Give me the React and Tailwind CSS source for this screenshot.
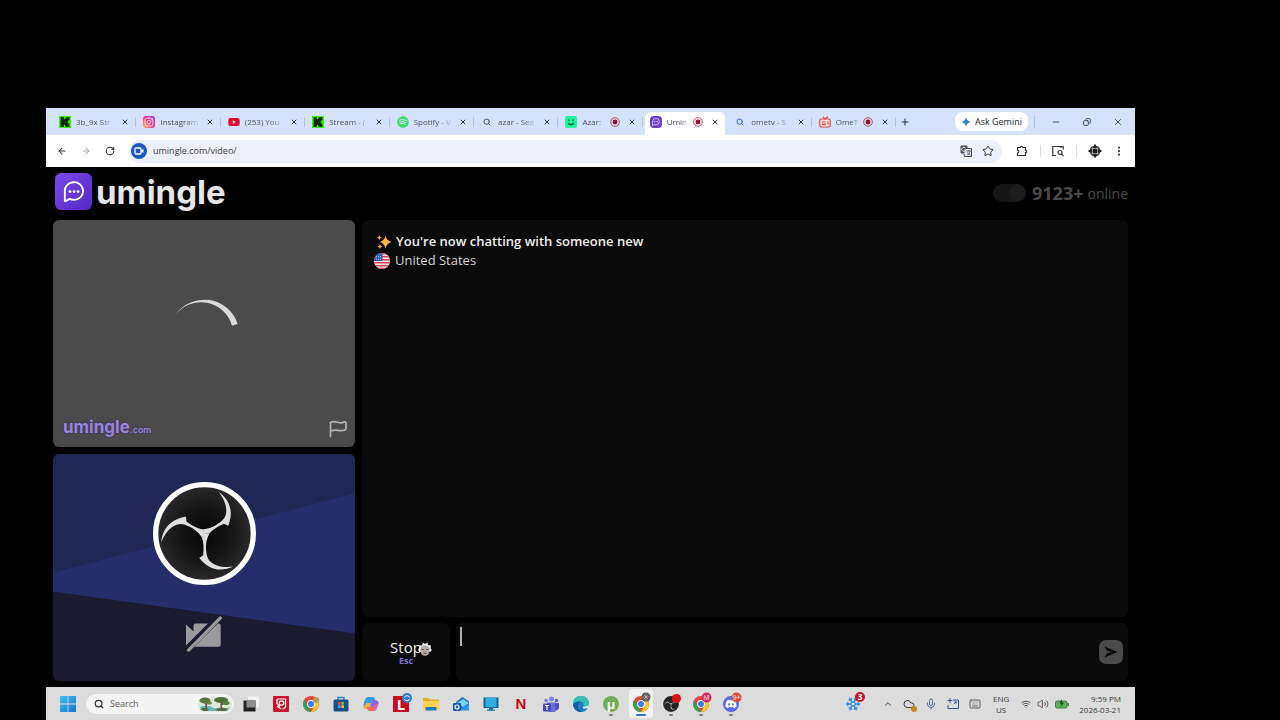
import React from "react";
import {
  ArrowLeft, ArrowRight, RotateCw, X, Search, Star, Plus, Minus, ChevronUp,
  EllipsisVertical, Mic, Keyboard, Wifi, Volume2, Snowflake, Cloud, Copy,
} from "lucide-react";
import { FaYoutube, FaSpotify, FaInstagram, FaDiscord } from "react-icons/fa";
import { SiKick } from "react-icons/si";

/* ---------- favicons ---------- */

const KickIcon = () => (
  <span className="flex size-3 items-center justify-center bg-[#35f50d]">
    <SiKick className="size-2.5 text-[#0a2a05]" />
  </span>
);

const InstagramIcon = () => (
  <span className="flex size-3 items-center justify-center rounded-[3px] bg-linear-to-tr from-[#fdb03a] via-[#f0267c] to-[#9b2be0]">
    <FaInstagram className="size-[10px] text-white" />
  </span>
);

const SpotifyIcon = () => <FaSpotify className="size-3 text-[#3ddc6b]" />;

const SmileIcon = () => (
  <svg viewBox="0 0 12 12" className="size-3">
    <rect width="12" height="12" rx="2" fill="#1df79b" />
    <path d="M3 4.2h1.6M7.2 4.2h1.6M3 7.2c1.8 2 4.2 2 6 0" stroke="#0b3d2a" strokeWidth="1.2" fill="none" />
  </svg>
);

const TvIcon = () => (
  <svg viewBox="0 0 12 12" className="size-3" fill="none" stroke="#e0453f" strokeWidth="1.2">
    <rect x="0.8" y="3" width="10.4" height="8" rx="1.5" fill="#fbe3e4" />
    <path d="M4 1l2 2 3-2.5M3 6h4M3 8.3h4M9 5.5v3" />
  </svg>
);

const BubbleGlyph = ({ className }) => (
  <svg viewBox="0 0 24 24" className={className} fill="none" stroke="#fff" strokeWidth="2" strokeLinecap="round" strokeLinejoin="round">
    <path d="M2 22V12A10 9.6 0 1 1 12 20.500Q9 20.500 7 19.500Q5 21.500 2 22Z" />
    <g fill="#fff" stroke="none">
      <circle cx="7.600" cy="11.500" r="1.500" />
      <circle cx="12" cy="11.500" r="1.500" />
      <circle cx="16.400" cy="11.500" r="1.500" />
    </g>
  </svg>
);

const UmingleFavicon = () => (
  <span className="flex size-3 items-center justify-center rounded-sm bg-[#6a3dd0]">
    <BubbleGlyph className="size-2" />
  </span>
);

const RecordDot = () => (
  <svg viewBox="0 0 10 10" className="size-2.5 shrink-0" aria-label="Recording">
    <circle cx="5" cy="5" r="4.300" fill="none" stroke="#c23a52" strokeWidth="0.900" />
    <circle cx="5" cy="5" r="2.400" fill="#9b1030" />
  </svg>
);

const TABS = [
  { title: "3b_9x Str", icon: <KickIcon /> },
  { title: "Instagram", icon: <InstagramIcon /> },
  { title: "(253) You", icon: <FaYoutube className="size-3 text-[#e8002a]" /> },
  { title: "Stream - (", icon: <KickIcon /> },
  { title: "Spotify - V", icon: <SpotifyIcon /> },
  { title: "azar - Sea", icon: <Search className="size-2 text-[#44546f]" strokeWidth={3} /> },
  { title: "Azar:", icon: <SmileIcon />, rec: true },
  { title: "Umin", icon: <UmingleFavicon />, rec: true, active: true },
  { title: "ometv - S", icon: <Search className="size-2 text-[#3a67b8]" strokeWidth={3} /> },
  { title: "OmeT", icon: <TvIcon />, rec: true },
];

function Tab({ title, icon, rec, active }) {
  return (
    <div className="flex min-w-0 flex-1 items-end">
      <div className={`flex h-[23px] w-full min-w-0 items-center pb-1 ${active ? "mx-0.5 rounded-t-md bg-white pr-1.5 pl-1" : "pr-1.5 pl-1.5"}`}>
        <button className="flex min-w-0 flex-1 items-center gap-1 text-left text-[8px] text-[#4b5161]">
          <span className="flex size-3.5 shrink-0 items-center justify-center">{icon}</span>
          <span className="min-w-0 flex-1 whitespace-nowrap [mask-image:linear-gradient(to_right,black_65%,rgb(0_0_0/0.2))]">{title}</span>
          {rec && <RecordDot />}
        </button>
        <button aria-label={`Close ${title}`} className="ml-2 text-[#2e3340]">
          <X className="size-2" strokeWidth={3} />
        </button>
      </div>
      {!active && <span className="mb-2 h-2.5 w-px shrink-0 bg-[#b4c2de]" />}
    </div>
  );
}

function TabStrip() {
  return (
    <div className="flex h-[27px] bg-[#d5e2fb]">
      <div className="flex min-w-0 flex-1 pl-1.5">
        {TABS.map((t, i) => <Tab key={i} {...t} />)}
      </div>
      <div className="flex w-[239px] shrink-0 items-center text-[#2e3340]">
        <button aria-label="New tab" className="ml-1"><Plus className="size-2.5" strokeWidth={2.500} /></button>
        <button className="ml-[45px] flex h-[19px] w-[73px] items-center justify-center gap-1 rounded-lg bg-white text-[9px] font-medium text-[#23262e]">
          <svg viewBox="0 0 10 10" className="size-2.5">
            <defs>
              <linearGradient id="gem" x1="0" y1="1" x2="1" y2="0">
                <stop offset="0" stopColor="#f0b429" /><stop offset="0.350" stopColor="#34a08a" /><stop offset="0.600" stopColor="#3478f0" /><stop offset="1" stopColor="#2f6fe0" />
              </linearGradient>
            </defs>
            <path d="M5 0Q5.800 4.200 10 5Q5.800 5.800 5 10Q4.200 5.800 0 5Q4.200 4.200 5 0Z" fill="url(#gem)" />
          </svg>
          Ask Gemini
        </button>
        <span className="ml-1.5 h-3 w-px bg-[#b4c2de]" />
        <button aria-label="Minimize" className="ml-4"><Minus className="size-2.5" /></button>
        <button aria-label="Restore" className="ml-[22px]"><Copy className="size-2 -scale-x-100" strokeWidth={2.500} /></button>
        <button aria-label="Close window" className="ml-[22px]"><X className="size-2.5" /></button>
      </div>
    </div>
  );
}

function AddressBar() {
  return (
    <div className="flex h-8 items-center bg-white text-[#30343c]">
      <button aria-label="Back" className="ml-[11px]"><ArrowLeft className="size-2.5" strokeWidth={2.500} /></button>
      <button aria-label="Forward" className="ml-3.5 text-[#a9acb3]"><ArrowRight className="size-2.5" strokeWidth={2.500} /></button>
      <button aria-label="Reload" className="ml-3.5"><RotateCw className="size-2.5" strokeWidth={2.500} /></button>
      <div className="ml-3.5 flex h-[23px] min-w-0 flex-1 items-center rounded-full bg-[#edeffa]">
        <span className="ml-0.5 flex size-4 items-center justify-center rounded-full bg-[#1f55c4]">
          <svg viewBox="0 0 10 10" className="size-2.5"><rect x="1" y="2" width="6" height="6" rx="1" fill="none" stroke="#fff" strokeWidth="1.300" /><path d="M7 4.500l2.500-1.500v4l-2.500-1.500z" fill="#fff" /></svg>
        </span>
        <input aria-label="Address" defaultValue="umingle.com/video/" className="ml-1.5 min-w-0 flex-1 bg-transparent text-[9px] text-[#3c4048] outline-none" />
        <button aria-label="Translate">
          <svg viewBox="0 0 12 12" className="size-3">
            <rect x="0.500" y="0.500" width="7" height="8" rx="1" fill="#4a4e57" />
            <path d="M6 3.500h5.500v8H4.500l-.5-2.500" fill="#dfe1e8" stroke="#4a4e57" />
            <path d="M6.500 6h4.500M8.800 5v1M10.200 6q-.5 3-3 4M7.500 7.500q1 2 3 2.500" fill="none" stroke="#4a4e57" strokeWidth="0.800" />
            <path d="M5.500 3.300a2 2 0 1 0 .2 1.700H4" fill="none" stroke="#fff" strokeWidth="0.800" />
          </svg>
        </button>
        <button aria-label="Bookmark" className="mr-2 ml-2.5"><Star className="size-3" /></button>
      </div>
      <button aria-label="Extensions" className="ml-3.5">
        <svg viewBox="0 0 12 12" className="size-3" fill="none" stroke="#30343c" strokeWidth="1.200"><path d="M1.500 2.500h3a1.200 1.200 0 0 1 2.400 0h2.600v2.800a1.200 1.200 0 0 1 0 2.400v2.800h-8V8a1.200 1.200 0 0 0 0-2.800z" /></svg>
      </button>
      <span className="ml-3 h-3 w-px bg-[#d4d9e8]" />
      <button aria-label="Tab search" className="ml-[11px]">
        <svg viewBox="0 0 12 12" className="size-3" fill="none" stroke="#30343c" strokeWidth="1.200"><path d="M4 10.500H.8v-9h10.400v3M9 1.500V3" /><circle cx="8" cy="7.500" r="2" /><path d="M9.500 9l2 2.200" /></svg>
      </button>
      <span className="ml-3 h-3 w-px bg-[#d4d9e8]" />
      <button aria-label="Profile" className="ml-[11px]">
        <svg viewBox="0 0 14 14" className="size-3.5"><circle cx="7" cy="7" r="5.500" fill="#3a3d3c" /><path d="M7 0.500v13M0.500 7h13" stroke="#222" strokeWidth="2" /><path d="M3.500 4.500h7M3.500 9.500h7M4.500 3.500v7M9.500 3.500v7" stroke="#b8bbb9" strokeWidth="0.700" /><circle cx="7" cy="7" r="2" fill="#181a19" /></svg>
      </button>
      <button aria-label="Menu" className="mr-2.5 ml-[11px]"><EllipsisVertical className="size-3" strokeWidth={2.500} /></button>
    </div>
  );
}

/* ---------- chat page ---------- */

function Header() {
  return (
    <header className="flex h-[53px] items-center justify-between pr-[7px] pl-[9px]">
      <a href="#home" className="mb-1 flex items-center gap-1">
        <span className="flex size-[37px] items-center justify-center rounded-md bg-linear-to-br from-[#7a4bea] to-[#5426c4]">
          <BubbleGlyph className="size-[22px]" />
        </span>
        <span className="[font-family:Inter,sans-serif] text-[33px] leading-9 font-bold text-[#e6e6e6]">umingle</span>
      </a>
      <div className="flex items-center pb-0.5 text-[#4b4b4b]">
        <input type="checkbox" role="switch" defaultChecked aria-label="Theme" className="mr-1.5 h-[18px] w-[33px] appearance-none rounded-full bg-[radial-gradient(circle_at_25px_9px,#1d1d1d_8px,#161616_9px)]" />
        <span className="text-[18px] leading-6 font-bold">9123+</span>
        <span className="ml-1 pt-0.5 text-[14px] leading-6">online</span>
      </div>
    </header>
  );
}

function RemoteVideo() {
  return (
    <section className="flex flex-1 flex-col rounded-md bg-[#4b4b4b]">
      <div className="flex flex-1 justify-center pt-[78px]">
        <svg viewBox="370 54 210 96" className="h-8 w-[70px]">
          <path d="M390 103A105.500 105.500 0 0 1 576 132L559 137A97 97 0 0 0 390 103Z" fill="#d9d9d9" />
        </svg>
      </div>
      <div className="flex items-center justify-between px-2 pb-[5px] pl-2.5">
        <span className="[font-family:Inter,sans-serif] text-[17px] leading-6 font-bold text-[#9a84dc] [text-shadow:0_0_2px_#33245f]">
          umingle<span className="text-[9px] font-semibold">.com</span>
        </span>
        <button aria-label="Report">
          <svg viewBox="0 0 18 18" className="size-[18px]" fill="none" stroke="#b5b5b5" strokeWidth="1.700" strokeLinecap="round" strokeLinejoin="round">
            <path d="M1.500 16.500V2.500Q4.500 .8 8.500 2.200T15 2Q17 1.500 17 3V8.500Q16.800 10.300 14 10.500T8.500 10.300T1.500 11" />
          </svg>
        </button>
      </div>
    </section>
  );
}

const BLADE = "M42-125C64-98 76-58 52-38C36-24 16-13-6-13L0 1L14 1C22-10 38-20 58-29L71-23C84-55 84-95 42-125Z";

function LocalVideo() {
  return (
    <section className="grid flex-1 overflow-hidden rounded-md bg-[#1b1a2e]">
      <svg viewBox="0 0 908 682" preserveAspectRatio="none" className="col-start-1 row-start-1 h-0 min-h-full w-full">
        <path d="M0 0H908V118L0 358Z" fill="#202755" />
        <path d="M0 357L908 117V539L0 413Z" fill="#252d6b" />
      </svg>
      <div className="col-start-1 row-start-1 flex flex-col items-center pt-7">
        <svg viewBox="-154 -154 308 308" className="size-[103px]">
          <defs>
            <radialGradient id="disc"><stop offset="0" stopColor="#050505" /><stop offset="0.500" stopColor="#151415" /><stop offset="1" stopColor="#2b292b" /></radialGradient>
          </defs>
          <circle r="146" fill="url(#disc)" stroke="#fff" strokeWidth="16" />
          <g fill="#dedede">
            <path d={BLADE} />
            <path d={BLADE} transform="rotate(120)" />
            <path d={BLADE} transform="rotate(240)" />
          </g>
        </svg>
        <button aria-label="Turn camera on" className="mt-[30px]">
          <svg viewBox="418 496 116 114" className="h-[38px] w-[38px]">
            <path d="M421 524L444 545V527Q444 521 450 521H488L421 588Z" fill="#9a9a9c" />
            <path d="M446 592L518 521Q527 520 527 528V585Q527 592 520 592Z" fill="#9a9a9c" />
            <path d="M429 602L526 504" stroke="#9a9a9c" strokeWidth="10" strokeLinecap="round" />
          </svg>
        </button>
      </div>
    </section>
  );
}

function ChatLog() {
  return (
    <section className="flex-1 rounded-md bg-[#0a0a0a] px-3 pt-3 text-[13px] leading-[19px] text-[#d5d5d5]">
      <p className="flex items-center gap-1 font-semibold text-[#f0f0f0]">
        <svg viewBox="0 0 16 16" className="ml-0.5 size-4 shrink-0">
          <path d="M9.500 1.500Q10.500 6.500 15.500 8Q10.500 9.500 9.500 14.500Q8.500 9.500 4 8Q8.500 6.500 9.500 1.500Z" fill="#f7b548" />
          <path d="M3.500 1Q3.800 3 6 3.500Q3.800 4 3.500 6Q3.200 4 1 3.500Q3.200 3 3.500 1ZM4 10Q4.300 12 6.500 12.500Q4.300 13 4 15Q3.700 13 1.500 12.500Q3.700 12 4 10Z" fill="#f0a83e" />
        </svg>
        You're now chatting with someone new
      </p>
      <p className="flex items-center gap-[5px]">
        <svg viewBox="0 0 16 16" className="size-4 shrink-0">
          <defs><clipPath id="round"><circle cx="8" cy="8" r="8" /></clipPath></defs>
          <g clipPath="url(#round)">
            <rect width="16" height="16" fill="#f3e6ea" />
            <path d="M0 .8H16M0 3.800H16M0 6.800H16M0 9.800H16M0 12.800H16M0 15.500H16" stroke="#d8405a" strokeWidth="1.400" />
            <rect width="8.500" height="8" fill="#3b5fa8" />
            <path d="M2 3.500h6M2 6h6" stroke="#dfe7f7" strokeWidth="0.800" strokeDasharray="0.800 1.200" />
          </g>
        </svg>
        United States
      </p>
    </section>
  );
}

function Composer() {
  return (
    <div className="flex h-[58px] gap-1.5">
      <button className="flex w-[88px] shrink-0 flex-col items-center justify-center rounded-md bg-[#0a0a0a]">
        <span className="relative text-[15px] leading-4 text-[#f0f0f0]">
          Stop
          <svg viewBox="0 0 14 16" className="absolute top-0.5 -right-2.5 h-4 w-3.5">
            <path d="M1 7L2 4.500L4 4.500L5 1.500L7 3L9.500 1.500L10 4L13 4.500L12.500 7.500L14 9L12 11L2 11L0 9Z" fill="#f1f1f1" />
            <ellipse cx="7" cy="9.500" rx="4.700" ry="5.200" fill="#b5a9a6" />
            <path d="M3.500 8.500h2.500M8 8.500h2.500M5.500 12.300h3" stroke="#5b5250" strokeWidth="1" />
          </svg>
        </span>
        <span className="text-[9px] leading-[11px] font-bold text-[#8671dc]">Esc</span>
      </button>
      <form className="flex min-w-0 flex-1 items-center rounded-md bg-[#0a0a0a] pr-[5px] pl-1" onSubmit={(e) => e.preventDefault()}>
        <span aria-hidden="true" className="mt-1 h-[19px] w-0.5 self-start bg-[#b0b0b0]" />
        <textarea aria-label="Message" className="h-12 min-w-0 flex-1 resize-none bg-transparent text-[14px] text-white outline-none" />
        <button aria-label="Send" className="flex size-6 items-center justify-center rounded-[7px] bg-[#4a4a4a]">
          <svg viewBox="0 0 14 12" className="h-3 w-3.5"><path d="M0.500 0.500L13.500 6L0.500 11.500L3 7.200L8 6L3 4.800Z" fill="#080808" /></svg>
        </button>
      </form>
    </div>
  );
}

/* ---------- taskbar ---------- */

const ChromeIcon = () => (
  <svg viewBox="0 0 16 16" className="size-4">
    <circle cx="8" cy="8" r="8" fill="#e04a3a" />
    <path d="M1.100 4L5 10.500L8 16A8 8 0 0 1 1.100 4Z" fill="#2da353" />
    <path d="M8 16A8 8 0 0 0 14.900 4.300H8L11.500 10Z" fill="#f7c92d" />
    <circle cx="8" cy="8" r="3.900" fill="#fff" />
    <circle cx="8" cy="8" r="3" fill="#3a7de8" />
  </svg>
);

const APPS = [
  { name: "Task view", icon: <svg viewBox="0 0 16 16" className="size-4"><rect x="5" y="0.500" width="11" height="11" fill="#f3f3f3" /><rect x="0.500" y="4.500" width="12" height="11" fill="#232323" /><path d="M3.500 4.500h9v7h-9z" fill="#8e8e8e" /></svg> },
  { name: "Reader", icon: <svg viewBox="0 0 16 16" className="size-4"><rect width="16" height="16" rx="1" fill="#c8142e" /><path d="M4 3h8.500v7a3 3 0 0 1-3 3M4 3v4.500l3 3" fill="none" stroke="#fff" strokeWidth="1.200" /><circle cx="8.500" cy="7" r="2.200" fill="none" stroke="#fff" strokeWidth="1.200" /><path d="M4 10l4 3" stroke="#fff" strokeWidth="1.200" /></svg> },
  { name: "Chrome", icon: <ChromeIcon />, badge: <circle cx="13" cy="4" r="3" fill="#b89a62" /> },
  { name: "Store", icon: <svg viewBox="0 0 16 16" className="size-4"><path d="M5 4V1.500h6V4" fill="none" stroke="#2f86c9" strokeWidth="1.400" /><rect x="0.500" y="3.500" width="15" height="12" rx="1.500" fill="#1d4d80" /><path d="M5 6h2.700v2.700H5z" fill="#e8553a" /><path d="M8.300 6H11v2.700H8.300z" fill="#7fbb30" /><path d="M5 9.300h2.700V12H5z" fill="#36a3e8" /><path d="M8.300 9.300H11V12H8.300z" fill="#f6bd27" /></svg> },
  { name: "Copilot", icon: <svg viewBox="0 0 16 16" className="size-4"><path d="M5 1h5q1.500 0 2 2l.5 2H9L6.500 12H3Q0 12 .5 8.500L2 3.500Q3 1 5 1Z" fill="#2f9be0" /><path d="M2 9L.5 11Q1 13.500 3.500 13H6L8 7H3Z" fill="#e9b53d" /><path d="M11 15H6.500q-1.500 0-2-2L4 11H7L9.500 4.500H13q3 0 2.500 3.500L14 12.500Q13 15 11 15Z" fill="#d965c0" /><path d="M9.500 4.500H13q2.500 0 2.500 2.500L10 10H7.500Z" fill="#8a63e6" /><path d="M7 11h4.500l-1.500 4H6.500q-1.500 0-2-2L4 11Z" fill="#ee7057" /></svg> },
  { name: "Launcher", icon: <span className="flex size-4 items-center justify-center bg-[#c20f1f] text-[15px] leading-4 font-bold text-white">L</span>, badge: <><circle cx="14" cy="2" r="5" fill="#2c7ad0" /><path d="M11.500 1.500a2.600 2.600 0 0 1 5 0M16.500 3a2.600 2.600 0 0 1-5 0" stroke="#fff" fill="none" strokeWidth="1" /></> },
  { name: "Files", icon: <svg viewBox="0 0 16 16" className="size-4"><path d="M0 2h6l1.500 1.500H16V14H0z" fill="#e9ad2c" /><path d="M0 5h16v9H0z" fill="#fbd254" /><path d="M3.500 11h9a1 1 0 0 1 1 1v2.500h-11V12a1 1 0 0 1 1-1z" fill="#2478b8" /></svg> },
  { name: "Outlook", icon: <svg viewBox="0 0 16 16" className="size-4"><path d="M3 6L9.500 1L16 5.500V13.500H4z" fill="#1d6fc4" /><path d="M4 7l6-4 6 4-6 4z" fill="#7dd3f7" /><path d="M6 14.500L16 8v6.500z" fill="#2c97e8" /><rect y="7" width="8" height="8" rx="1" fill="#1d58ad" /><circle cx="4" cy="11" r="2" fill="none" stroke="#fff" strokeWidth="1.200" /></svg> },
  { name: "Monitor", icon: <svg viewBox="0 0 16 16" className="size-4"><rect x="0.500" y="1.500" width="15" height="10.500" fill="#1c5f95" /><rect x="2.500" y="1.500" width="11" height="9.500" fill="#31aede" /><path d="M6 11h4v3H6z" fill="#246f9c" /><path d="M4 13.500h8v1.500H4z" fill="#3787b4" /></svg> },
  { name: "Netflix", icon: <span className="[font-family:'Liberation_Sans_Narrow','Liberation_Sans',sans-serif] text-[15px] leading-4 font-bold text-[#c40a18]">N</span> },
  { name: "Teams", icon: <svg viewBox="0 0 16 16" className="size-4"><circle cx="8.500" cy="3" r="2.500" fill="#7f86ea" /><circle cx="13.500" cy="4.500" r="1.800" fill="#5b60cf" /><circle cx="3" cy="4.500" r="1.800" fill="#7a80e8" /><path d="M4 6.500h9v6a4 4 0 0 1-8 1z" fill="#6a70dd" /><path d="M12 7h4v5a3 3 0 0 1-4 2z" fill="#5053c2" /><rect y="7.500" width="8" height="8" rx="1" fill="#4648b4" /><path d="M2 9.500h4M4 9.500v4.500" stroke="#fff" strokeWidth="1.200" /></svg> },
  { name: "Edge", icon: <svg viewBox="0 0 16 16" className="size-4"><circle cx="8" cy="8" r="8" fill="#1c7fc6" /><path d="M0 8A8 8 0 0 1 16 7.500C16 10.500 13.500 11.500 10.500 10.500C11.500 8 10 5.500 7 5.500C3 5.500 0 8 0 8Z" fill="#36bfae" /><path d="M6 7C3.500 9.500 5 14.500 10 15.500C5.500 17 1 14 0 9C1.500 6 5 5 7 5.500Z" fill="#155ba5" /><path d="M10.200 10.400C9 12 10.500 13.200 14.800 12Q15.800 10.500 16 9Q13 11.500 10.200 10.400Z" fill="#e8f1f5" /></svg> },
  { name: "uTorrent", icon: <span className="flex size-4 items-center justify-center rounded-full bg-[#6fae57] text-[13px] leading-4 font-bold text-white">µ</span>, running: true },
  { name: "Chrome profile", icon: <ChromeIcon />, active: true, running: true, badge: <><circle cx="13" cy="1" r="4.500" fill="#4b4d4b" /><path d="M9 1h8M13-3v8M10.500-1.500l5 5M15.500-1.500l-5 5" stroke="#bdbdb8" strokeWidth="0.700" /></> },
  { name: "OBS Studio", running: true, icon: <svg viewBox="-154 -154 308 308" className="size-4"><circle r="152" fill="#262626" /><g fill="#c9c9c9"><path d={BLADE} /><path d={BLADE} transform="rotate(120)" /><path d={BLADE} transform="rotate(240)" /></g></svg>, badge: <circle cx="13.500" cy="2.500" r="4.500" fill="#e00d16" /> },
  { name: "Chrome M", icon: <ChromeIcon />, running: true, badge: <><circle cx="13.500" cy="1.500" r="5" fill="#d81e5e" /><text x="13.500" y="4" fontSize="7" textAnchor="middle" fill="#fff">M</text></> },
  { name: "Discord", running: true, icon: <span className="flex size-4 items-center justify-center rounded-full bg-[#5b6ae0]"><FaDiscord className="size-3 text-white" /></span>, badge: <><circle cx="13.500" cy="1.500" r="5" fill="#dc4a44" /><text x="13.500" y="4" fontSize="7" textAnchor="middle" fill="#fff">9+</text></> },
];

function TaskbarApp({ name, icon, badge, running, active }) {
  return (
    <button aria-label={name} className="flex w-[30px] items-center justify-center">
      <span className={`relative flex h-[29px] w-6 items-center justify-center rounded-sm ${active ? "bg-[#f1f1f1]" : ""}`}>
        <span className="relative flex">
          {icon}
          {badge && <svg viewBox="0 0 16 16" className="absolute inset-0 size-4 overflow-visible">{badge}</svg>}
        </span>
        {running && <span className={`absolute bottom-0.5 h-0.5 rounded-full ${active ? "w-2.5 bg-[#3c74c9]" : "w-1 bg-[#7c7c7c]"}`} />}
      </span>
    </button>
  );
}

function Taskbar() {
  return (
    <footer className="flex h-[33px] items-center bg-[#dcdcdc] text-[#3a3a3a]">
      <button aria-label="Start" className="ml-3.5">
        <svg viewBox="0 0 16 16" className="size-4">
          <defs><linearGradient id="win" x1="0" y1="0" x2="1" y2="1"><stop offset="0" stopColor="#45bdf2" /><stop offset="1" stopColor="#1479d0" /></linearGradient></defs>
          <path d="M0 0h7.600v7.600H0zM8.400 0H16v7.600H8.400zM0 8.400h7.600V16H0zM8.400 8.400H16V16H8.400z" fill="url(#win)" />
        </svg>
      </button>
      <label className="ml-2.5 flex h-5 w-[148px] items-center rounded-full bg-[#f4f4f4] pr-0.5 pl-2">
        <Search className="size-2.5 shrink-0 text-[#333]" strokeWidth={3} />
        <input aria-label="Search" placeholder="Search" className="ml-1.5 min-w-0 flex-1 bg-transparent text-[9px] outline-none placeholder:text-[#5c5c5c]" />
        <svg viewBox="0 0 34 16" className="h-4 w-[34px] shrink-0">
          <rect y="1" width="34" height="15" rx="7" fill="#dfe8dc" />
          <path d="M2 11Q9 8 16 12T32 11L29 15H5Z" fill="#63b8b4" />
          <path d="M2 13q4-2 9 0l-2 2H5zM17 13q7-3 13 0l-3 2h-7z" fill="#5b6b43" />
          <path d="M8 13Q9 9 7 6M24 13Q22 9 24 6M24 9l3-4" stroke="#6b5138" strokeWidth="1.400" fill="none" />
          <ellipse cx="7" cy="4.500" rx="5.500" ry="3" fill="#55753b" /><ellipse cx="23" cy="4" rx="7" ry="3" fill="#4b6e35" /><ellipse cx="28" cy="7" rx="3.500" ry="2" fill="#5d7e40" /><ellipse cx="11" cy="7" rx="3" ry="1.500" fill="#6b8849" />
        </svg>
      </label>
      <nav aria-label="Apps" className="ml-0.5 flex">
        {APPS.map((a) => <TaskbarApp key={a.name} {...a} />)}
      </nav>
      <div className="ml-auto flex items-center">
        <button aria-label="Weather, 3 alerts" className="relative mr-[22px]">
          <Snowflake className="size-4 text-[#3d8be4]" />
          <span className="absolute -top-1 -right-1 flex size-2.5 items-center justify-center rounded-full bg-[#bd1420] text-[8px] leading-none font-bold text-white">3</span>
        </button>
        <button aria-label="Hidden icons" className="mr-2.5"><ChevronUp className="size-2.5" /></button>
        <button aria-label="OneDrive" className="relative mr-2.5">
          <Cloud className="size-3" />
          <span className="absolute -right-0.5 -bottom-0.5 flex size-1.5 rounded-full bg-[#c48a1c]" />
        </button>
        <button aria-label="Microphone" className="mr-2.5"><Mic className="size-3 text-[#5a6f95]" /></button>
        <button aria-label="Snipping" className="mr-2.5">
          <svg viewBox="0 0 12 12" className="size-3" fill="none" stroke="#33578f" strokeWidth="1"><path d="M6 2h5.500v8.500H1V7" /><path d="M3 0v5M.5 2.500h5M7 6l2-2M7.500 3.800h1.700v1.700" /></svg>
        </button>
        <button aria-label="Touch keyboard" className="mr-3"><Keyboard className="size-3" strokeWidth={1.500} /></button>
        <button className="mr-3 text-center text-[8px] leading-[11px]">ENG<br />US</button>
        <button aria-label="Network, sound and battery" className="flex items-center gap-1.5">
          <Wifi className="size-2.5" />
          <Volume2 className="size-3" strokeWidth={1.500} />
          <svg viewBox="0 0 14 10" className="h-2.5 w-3.5"><rect x="0.500" y="2" width="11.500" height="7" rx="1.500" fill="#58b657" stroke="#3a7a3a" /><path d="M12.500 4h1.500v3h-1.500z" fill="#3a7a3a" /><path d="M6.500 0L4.500 4.500h2L5.500 8l3.500-4.500H7z" fill="#1d3d1d" /></svg>
        </button>
        <button className="mr-3.5 ml-2.5 text-right text-[8px] leading-[11px]">9:59 PM<br />2026-03-21</button>
      </div>
    </footer>
  );
}

export default function App() {
  return (
    <div className="flex min-h-screen flex-col bg-black pt-[108px] pr-[145px] pl-[46px] font-['Open_Sans','Noto_Sans',sans-serif]">
      <TabStrip />
      <AddressBar />
      <Header />
      <main className="flex flex-1 gap-[7px] pr-[7px] pb-[6px] pl-[7px]">
        <div className="flex w-[302px] shrink-0 flex-col gap-[7px]">
          <RemoteVideo />
          <LocalVideo />
        </div>
        <div className="flex min-w-0 flex-1 flex-col gap-[6px]">
          <ChatLog />
          <Composer />
        </div>
      </main>
      <Taskbar />
    </div>
  );
}
